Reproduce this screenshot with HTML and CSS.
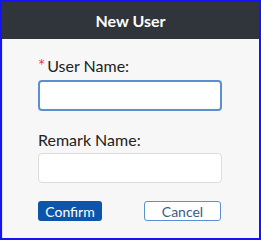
FILE: index.html
```html
<!DOCTYPE html>
<html lang="en">
<head>
    <meta charset="UTF-8">
    <title>New User</title>
    <link rel="stylesheet" href="styles.css">
</head>
<body>
    <div class="dialog">
        <div class="dialog-header">New User</div>
        <div class="dialog-body">
            <div class="form-group">
                <label for="userName"><span class="required">*</span>User Name:</label>
                <input type="text" id="userName" class="input active">
            </div>
            <div class="form-group second">
                <label for="remarkName">Remark Name:</label>
                <input type="text" id="remarkName" class="input">
            </div>
            <div class="actions">
                <button class="btn btn-primary">Confirm</button>
                <button class="btn btn-default">Cancel</button>
            </div>
        </div>
    </div>
</body>
</html>
```

FILE: styles.css
```css
* {
    margin: 0;
    padding: 0;
    box-sizing: border-box;
}

body {
    font-family: 'Lato', 'Open Sans', sans-serif;
    width: 261px;
    height: 240px;
    background-color: #ffffff;
}

.dialog {
    width: 261px;
    height: 240px;
    border: 2px solid #1414f5;
    background-color: #f7f7f7;
    display: flex;
    flex-direction: column;
}

.dialog-header {
    height: 37px;
    background-color: #30343b;
    color: #ffffff;
    font-size: 16px;
    font-weight: 700;
    text-align: center;
    line-height: 37px;
}

.dialog-body {
    flex: 1;
    padding: 17px 0 0 35px;
    border-left: 1px solid #e4e4e4;
}

.form-group label {
    display: block;
    height: 20px;
    line-height: 20px;
    font-size: 16px;
    color: #222222;
    margin-bottom: 4px;
}

.form-group.second {
    margin-top: 19px;
}

.form-group.second label {
    margin-bottom: 3px;
}

.required {
    color: #e8403a;
    margin-right: 2px;
    font-size: 17px;
}

.input {
    display: block;
    width: 184px;
    height: 30px;
    border: 1px solid #dcdcdc;
    border-radius: 4px;
    background-color: #ffffff;
    outline: none;
}

.input.active {
    height: 31px;
    border: 2px solid #5b8fd1;
}

.actions {
    display: flex;
    gap: 42px;
    margin-top: 18px;
}

.btn {
    height: 20px;
    font-family: inherit;
    font-size: 14px;
    border-radius: 3px;
    cursor: pointer;
}

.btn-primary {
    width: 64px;
    background-color: #0d55aa;
    border: none;
    color: #ffffff;
}

.btn-default {
    width: 77px;
    background-color: #ffffff;
    border: 1px solid #5b8fd1;
    color: #3b5a88;
}
```
